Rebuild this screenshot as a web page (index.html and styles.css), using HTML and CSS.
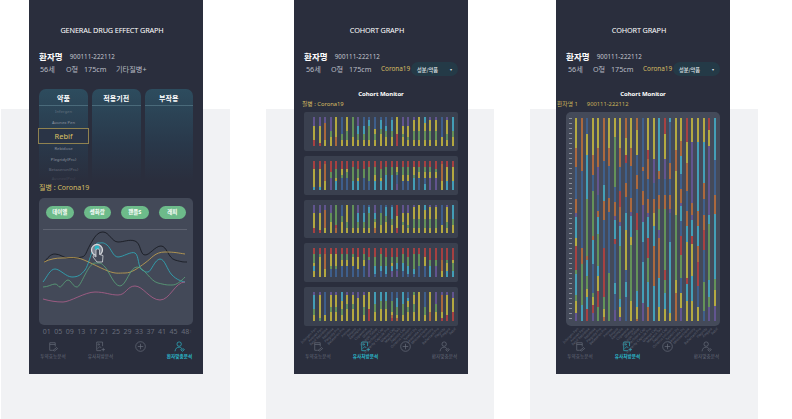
FILE: index.html
```html
<!DOCTYPE html>
<html lang="ko">
<head>
<meta charset="utf-8">
<title>Graphs</title>
<link rel="stylesheet" href="styles.css">
</head>
<body>
<main class="stage">

<section class="panel panel-a">
  <div class="phone">
    <h1 class="title">GENERAL DRUG EFFECT GRAPH</h1>
    <div class="patient"><strong>환자명</strong><span class="pid">900111-222112</span></div>
    <div class="facts facts-a"><span>56세</span><span>O형</span><span>175cm</span><span>기타질병+</span></div>
    <div class="cols">
      <div class="col">
        <h2>약품</h2>
        <ul class="drugs">
          <li class="d1">Infergen</li>
          <li class="d2">Avonex Pen</li>
          <li class="selected">Rebif</li>
          <li class="d2">Rebidose</li>
          <li class="d2">Plegridy(Pro)</li>
          <li class="d3">Betaseron(Pro)</li>
          <li class="d4">Avonex(Pro)</li>
        </ul>
      </div>
      <div class="col"><h2>적용기전</h2></div>
      <div class="col"><h2>부작용</h2></div>
    </div>
    <p class="disease">질병 : Corona19</p>
    <div class="chart">
      <div class="chips"><span>데이엘</span><span>셍화랑</span><span>왠플S</span><span>래피</span></div>
      <svg class="plot" viewBox="39 225 154 100" width="154" height="100" aria-hidden="true">
        <path class="rule" d="M43 229.5H187"/>
        <path class="ln" stroke="#14161d" d="M44 262C48 258 50 254 55 254S64 258 68 258S78 258 82 257S86 252 90 245S97 232 103 232S112 242 118 242S129 239 135 241S140 255 145 255S155 246 161 246S168 258 175 260S183 262 187 262"/>
        <path class="ln" stroke="#c9a650" d="M44 262C50 259 56 258 62 258S72 257 78 258S100 268 108 271S118 273 125 273S138 268 145 263S155 252 165 252S178 253 185 254"/>
        <path class="ln" stroke="#2fb0bf" d="M43 282C47 277 50 269 55 269S66 277 72 277S81 275 85 270S93 243 98 243S103 242 107 245S113 257 118 257S131 251 135 253S138 268 142 270S145 272 148 272S155 259 160 259S167 270 172 275S181 281 185 282"/>
        <path class="ln" stroke="#5aa57a" d="M43 287C48 287 52 284 55 284S58 287 60 287S65 280 68 280S73 287 77 287S88 263 95 263S101 263 105 267S114 286 120 286S130 267 137 267S150 281 158 283S167 285 172 285S181 281 185 277"/>
        <path class="ln" stroke="#b0608c" d="M43 299C50 301 56 302 63 302S85 292 95 292S110 295 118 295S127 286 135 286S150 300 160 300S175 282 185 282"/>
        <g class="touch">
          <circle class="halo" cx="97" cy="250" r="5.5"/>
          <circle class="dot" cx="97" cy="248" r="2.4"/>
          <path class="hand" d="M96 250V257L93.500 255.500L93 257L97 262H102.500L103 255.500L99.500 254.500V250C99.500 248.500 96 248.500 96 250Z"/>
        </g>
      </svg>
    </div>
    <div class="axis"><span>01</span><span>05</span><span>09</span><span>13</span><span>17</span><span>21</span><span>25</span><span>29</span><span>33</span><span>37</span><span>41</span><span>45</span><span class="last">48<small>1</small></span></div>
    <nav class="nav nav-a">
      <a><svg class="ico" viewBox="0 0 16 16"><use href="#i-doc"/></svg>투약효능분석</a>
      <a><svg class="ico" viewBox="0 0 16 16"><use href="#i-img"/></svg>유사처방분석</a>
      <a class="plus"><svg class="ico" viewBox="0 0 16 16"><use href="#i-plus"/></svg></a>
      <a class="on"><svg class="ico" viewBox="0 0 16 16"><use href="#i-user"/></svg>환자맞춤분석</a>
    </nav>
  </div>
</section>

<section class="panel panel-b">
  <div class="phone">
    <h1 class="title">COHORT GRAPH</h1>
    <div class="patient"><strong>환자명</strong><span class="pid">900111-222112</span></div>
    <div class="facts facts-b"><span>56세</span><span>O형</span><span>175cm</span><span class="gold">Corona19</span>
      <button class="pill">성분/약품<i>▾</i></button></div>
    <h2 class="monitor">Cohort Monitor</h2>
    <p class="label">질병 : Corona19</p>
    <div class="rows">
      <div class="bars row" data-row="0"></div>
      <div class="bars row" data-row="1"></div>
      <div class="bars row" data-row="2"></div>
      <div class="bars row" data-row="3"></div>
      <div class="bars row" data-row="4"></div>
    </div>
    <div class="ticks"></div>
    <nav class="nav nav-b">
      <a><svg class="ico" viewBox="0 0 16 16"><use href="#i-doc"/></svg>투약효능분석</a>
      <a class="on"><svg class="ico" viewBox="0 0 16 16"><use href="#i-img"/></svg>유사처방분석</a>
      <a class="plus"><svg class="ico" viewBox="0 0 16 16"><use href="#i-plus"/></svg></a>
      <a><svg class="ico" viewBox="0 0 16 16"><use href="#i-user"/></svg>환자맞춤분석</a>
    </nav>
  </div>
</section>

<section class="panel panel-c">
  <div class="phone">
    <h1 class="title">COHORT GRAPH</h1>
    <div class="patient"><strong>환자명</strong><span class="pid">900111-222112</span></div>
    <div class="facts facts-b"><span>56세</span><span>O형</span><span>175cm</span><span class="gold">Corona19</span>
      <button class="pill">성분/약품<i>▾</i></button></div>
    <h2 class="monitor">Cohort Monitor</h2>
    <p class="label label-c"><span>환자명 1</span><span>900111-222112</span></p>
    <div class="big">
      <div class="scale"></div>
      <div class="bars tall" data-row="tall"></div>
    </div>
    <div class="ticks"></div>
    <nav class="nav nav-b">
      <a><svg class="ico" viewBox="0 0 16 16"><use href="#i-doc"/></svg>투약효능분석</a>
      <a class="on"><svg class="ico" viewBox="0 0 16 16"><use href="#i-img"/></svg>유사처방분석</a>
      <a class="plus"><svg class="ico" viewBox="0 0 16 16"><use href="#i-plus"/></svg></a>
      <a><svg class="ico" viewBox="0 0 16 16"><use href="#i-user"/></svg>환자맞춤분석</a>
    </nav>
  </div>
</section>

</main>

<svg class="defs" aria-hidden="true">
  <symbol id="i-doc" viewBox="0 0 16 16">
    <path d="M10.500 8V2.500H2.500V13.500H7"/><path d="M2.500 5H10.500"/><path d="M7.500 13.500L12.500 9.500L14 11L9.500 14.500Z"/>
  </symbol>
  <symbol id="i-img" viewBox="0 0 16 16">
    <path d="M11 7.500V1.500H2.500V14H9"/><circle cx="5.500" cy="5" r="1"/><path d="M4 11L7 8L9 10"/><path d="M12 10V15M9.500 12.500H14.500"/>
  </symbol>
  <symbol id="i-plus" viewBox="0 0 16 16">
    <circle cx="8" cy="8" r="7"/><path d="M8 4V12M4 8H12"/>
  </symbol>
  <symbol id="i-user" viewBox="0 0 16 16">
    <circle cx="7.500" cy="4.500" r="3.200"/><path d="M1.500 15C2 11 4 9 7.500 9C9 9 10.500 9.500 11.500 11"/><path d="M10 13L12 15L14.800 13C15.500 11.800 13.500 10.800 12.500 12C11.500 10.800 9.500 11.800 10 13Z"/>
  </symbol>
</svg>

<script src="app.js"></script>
</body>
</html>
```

FILE: styles.css
```css
* { box-sizing: border-box; }
html, body { margin: 0; height: 100%; background: #fff; overflow: hidden; }
body { font-family: "Noto Sans", "Noto Sans CJK KR", sans-serif; color: #fff; }
h1, h2, p, ul { margin: 0; padding: 0; font-weight: 400; }
ul { list-style: none; }

.stage { display: flex; height: 419px; padding-left: 1px; gap: 36px; }
.panel { position: relative; background: #f1f2f4; margin-top: 109px; height: 310px; width: 228px; }
.panel-a { width: 229px; }
.phone {
  position: absolute; top: -109px; width: 174px; height: 374px;
  background: #2a2e3d; display: flex; flex-direction: column;
}
.panel-a .phone { left: 28px; }
.panel-b .phone { left: 28px; }
.panel-c .phone { left: 26px; }

.title { margin-top: 24px; height: 12px; line-height: 12px; font-size: 7.300px; text-align: center; padding-right: 8px; white-space: nowrap; letter-spacing: -.15px; }
.patient { margin-top: 15px; height: 12px; line-height: 12px; padding-left: 10px; display: flex; gap: 7px; align-items: center; }
.patient strong { font-size: 8.500px; font-weight: 700; letter-spacing: .1px; }
.pid { font-size: 6.200px; color: #c5c8cf; letter-spacing: .05px; }
.facts { height: 12px; line-height: 12px; display: flex; align-items: center; font-size: 7.200px; color: #b9bcc4; white-space: nowrap; padding-left: 11px; position: relative; }
.facts-a span:nth-child(1) { width: 26px; }
.facts-a span:nth-child(2) { width: 18px; }
.facts-a span:nth-child(3) { width: 32px; }
.facts-b { padding-left: 12px; }
.facts-b span:nth-child(1) { width: 25px; }
.facts-b span:nth-child(2) { width: 18px; }
.facts-b span:nth-child(3) { width: 32px; }
.gold { color: #d6bd63; }
.facts .gold { font-size: 6.400px; }
.pill {
  position: absolute; left: 117px; top: -1px; width: 47px; height: 14px; border: 0; border-radius: 7px;
  background: #243a47; color: #dfe3e6; font: 500 5.200px "Noto Sans CJK KR", sans-serif;
  display: flex; align-items: center; justify-content: space-between; padding: 0 6px;
}
.pill i { font-style: normal; font-size: 4px; }

.cols { display: flex; gap: 4px; margin: 14px 10px 0; height: 92px; }
.col { flex: 1; border-radius: 7px 7px 0 0; background: linear-gradient(#2d4c5e 0%, #29384a 60%, #2a2e3d 100%); position: relative; }
.col h2 { height: 17px; line-height: 19px; text-align: center; font-size: 7px; font-weight: 700; border-bottom: 1px solid #4a6a7a; }
.drugs { display: flex; flex-direction: column; align-items: center; font-size: 4.200px; color: #8d94a0; padding-top: 1px; }
.drugs li { height: 10.500px; line-height: 10.500px; white-space: nowrap; }
.drugs .d1 { opacity: .55; }
.drugs .d3 { opacity: .6; height: 9px; line-height: 9px; }
.drugs .d4 { opacity: .22; height: 9px; line-height: 9px; }
.drugs .selected { width: 51px; height: 16px; line-height: 15px; margin: 0 -1px; border: 1px solid #8f8250; color: #dcc265; font-size: 7.500px; text-align: center; background: #2a3446; position: relative; z-index: 1; }

.disease { margin: 1px 0 0 10px; height: 12px; line-height: 12px; font-size: 7px; color: #d6bd63; }
.chart { margin: 4px 10px 0; width: 154px; height: 127px; background: #434958; border-radius: 5px; overflow: hidden; }
.chips { display: flex; gap: 10px; padding: 8px 7px 0; height: 27px; }
.chips span { width: 28px; height: 13px; border-radius: 7px; background: #6dbb8a; font-size: 5.500px; font-weight: 700; line-height: 12px; text-align: center; }
.plot { display: block; }
.rule { stroke: #6a6f7d; stroke-width: .7; fill: none; }
.ln { fill: none; stroke-width: .8; }
.halo { fill: #7d8390; stroke: #d5d8dc; stroke-width: 1.300; }
.dot { fill: #2bb8c9; }
.hand { fill: #434958; stroke: #d5d8dc; stroke-width: .8; }

.axis { margin: 1px 0 0 12px; width: 150px; height: 12px; line-height: 12px; display: grid; grid-template-columns: repeat(13, 11.540px); font-size: 7px; color: #686d7b; text-align: center; }
.axis .last { position: relative; }
.axis small { position: absolute; left: 10px; top: 0; font-size: 4px; opacity: .6; }

.nav { display: grid; grid-template-columns: 48px 47px 32px 47px; margin-top: 3px; }
.nav a { display: flex; flex-direction: column; align-items: center; font-size: 4.600px; line-height: 6px; color: #686d7b; white-space: nowrap; }
.nav .ico { width: 11px; height: 11px; fill: none; stroke: #686d7b; stroke-width: 1; margin-bottom: 1px; display: block; }
.nav .on { color: #2bb8c9; font-weight: 700; }
.nav .on .ico { stroke: #2bb8c9; }
.nav-b { margin-top: 2px; }

.monitor { margin-top: 12px; height: 12px; line-height: 12px; font-size: 6px; font-weight: 700; text-align: center; padding-right: 0; letter-spacing: -.05px; transform: translateY(1px); }
.label { height: 10px; line-height: 10px; margin: 0 0 3px 8px; font-size: 5.800px; color: #d6bd63; }
.label-c { margin-left: 1px; display: flex; gap: 9px; color: #c9b35a; }
.rows { display: flex; flex-direction: column; gap: 5px; margin: 0 10px; height: 214px; }
.row { flex: 1; min-height: 0; background: #3a404f; border-radius: 2px; padding: 5px 4px 5px 9px; }
.bars { display: flex; justify-content: space-between; }
.bar { width: 2px; display: flex; flex-direction: column; opacity: .85; }
.seg { display: block; min-height: 0; }
.s-y { background: #c9bb3e; }
.s-r { background: #b8413f; }
.s-o { background: #bd6f3a; }
.s-p { background: #68589a; }
.s-b { background: #3f6496; }
.s-g { background: #6a9f5a; }
.s-c { background: #45aec8; }

.big { margin: 0 10px; height: 214px; background: #444a59; border-radius: 5px; display: flex; padding: 6px 4px 5px 3px; gap: 3px; }
.scale { width: 3px; background: repeating-linear-gradient(#c5c8cf 0 1px, transparent 1px 5px); opacity: .55; }
.tall { flex: 1; padding: 0; }

.ticks { margin: 1px 0 0 10px; width: 154px; height: 12px; display: flex; justify-content: space-between; padding: 0 4px 0 8px; }
.tick { width: 3px; height: 3px; position: relative; }
.tick b { position: absolute; right: 0; top: 0; font-weight: 400; font-size: 3.400px; line-height: 4px; color: #626776; white-space: nowrap; transform-origin: right top; transform: rotate(-45deg); }

.defs { position: absolute; width: 0; height: 0; }
```

FILE: app.js
```js
var ROWS = {
  0: "pppyyyyyrr pppyyyyyyr ppooooooyy pppppggyyy yyyyyyyooo bbbbbbggyy yyyyygggyy gggggggyyy pppcccggyy bbbcccggyy bccgggggyy bbbbyyggyy bcccggyyyy bbbccggyyy bccccggyyy yyyyyyrrrr pppyyygyyy pppyyyygyy pyyyygggyy yyyyygggyy ccyyygggyy pyyyygggyy pyyyygggyy bbbbbbbyyy pyyyyyggyy cccccggyyy",
  1: "rrryyyyyyc rrryyyyyyc rooooooyyy rrrrggpppp rrrgggyccc rrryygbbbb rrryggbbbb rrgggggccc rrrgggyccc rrrgggbbbb rrgggggbbb rrgggyyccc rrrgggyccc rrgggccccc rrgggccccc rryygbbbpp rrgggyybbb rrgggyybbb rryyygcccc rrggyybbbb rrggyybbcc rrggyypppp rrrgyypppp rooooooyyy rryyyyyccc rryyyyyccc",
  2: "pppyyyyyrr pppyyyyyyr ppooooooyy pppgggyyyy gggggggroo bbbbggyyyy yyyyyyggyy ggggggggyy pppcccggyy bbbcccggyy bccgggggyy pppccgyyoo bbbggggyyy bcccggyyyy bccccggyyy rrrryyyyrr pppyyygyyy pppyyyygyy pyyyygggyy yyyyygggyy ccyyygggyy pyyyygggyy pyyyygggyy bbbbbbbyyy pyyyyyggyy cccccggyyy",
  3: "rrgggyccyy rrgyyyyyyy rroooooyyy rryyyygbbb rryyyygbbb rrggyybbbb rrggyybbbb rrgyyybbbb rrryyyybbb rrggyybbbb rrrgpppppp rrrgggcccb rrggggccbb rrrgggcccb rrrggyccpp rrrggccbpp rrgggcccbb rrrgggcccb rrgggggccb rrggggbbbb rrryyybbbb rrrrggcccc rrrrggpppp rrrrooooyy rrrrgyyycc rrrrygggcc",
  4: "pcccccggyy pyyyyyyyyg bbbbbbbbyy pyyyyggyyy pyyyyggyyy cccyyyggyy pyyyggyyyy pyyyggyyyy ppyyyyyyyy pyyyygggyy yyyyyyrrrr ccccgggyyy cccgggyyyy cccgggyyyy bbbggggyor bbcccgggyo ccccggggyy bbcyyggyyy gyyygggyyy yyyyyyyyyy bbbbbgggyy yyyyyyyooo ppppgggyyy pooooooyyr pyyyyyyyrr ppyyyyyrrr"
};

var TALL = [
  "y15 o9 b16 o7 p2 c10 y4 r12 g2 c10 g3 y6 p4",
  "o26 b38 o8 g8 g8 g4 c4 c4",
  "b8 y10 c16 c6 g28 o2 c8 g6 y4 c6 r6",
  "y18 o10 b8 g22 o2 c12 b14 g2 y4 r4 p4",
  "y15 o9 p14 b8 o3 c8 g16 c5 y7 r8 g7",
  "o21 b12 c8 o6 o3 b14 r24 g6 y4 o2",
  "y15 o9 b16 o7 b18 b12 g24",
  "y10 g26 b8 o7 p2 c10 r3 b20 c6 b8 p6",
  "y15 o9 b12 r8 o7 p2 c10 g26 c4 y5 p2",
  "o10 y8 r4 b10 o7 b8 c8 y20 b6 c7 b12",
  "y15 o9 b16 o7 p2 c10 y4 g28 y10",
  "o6 y12 b10 o7 b12 r8 g30 c8 y6 o1",
  "b24 o2 b10 o7 p2 p6 c10 b10 c20 p9",
  "y16 r4 o10 b10 o7 p2 c10 r10 g12 c12 o7",
  "y12 y8 p12 b8 o7 y2 y4 c10 o20 c12 c5",
  "c10 c16 o4 b8 o7 g10 p4 o20 c14 y7",
  "r8 y12 p10 b8 o7 g10 g20 r5 g6 c8 y6",
  "c2 b20 o8 b8 o7 p2 b14 c30 c5 y4",
  "y16 o10 y22 g10 g14 g8 y6 o14",
  "y12 o8 c10 b8 o7 p2 c8 b8 r10 g12 b8 y8 p7",
  "r12 y10 o14 b10 o7 c8 y10 y8 r3 c8 y10",
  "y12 p30 o6 p2 c8 r4 y16 c12 y10",
  "y12 c34 o7 c10 o8 r12 b10 y7",
  "y12 c20 o8 b8 o7 r10 b16 g8 g6 b5",
  "r6 y8 p24 p6 p4 c4 g28 c8 g5 p7",
  "c22 b18 o6 o4 c8 c26 g6 y8 p8"
];

var NAMES = ["Infergen Pen","Avonex Pen","Rebif Rebidose","Rebidose","Plegridy Pro","Betaseron Pro","Avonex","Extavia","Kesimpta","Copaxone","Glatopa","Aubagio Tablet","Tecfidera Cap","Vumerity Capsule Pro","Gilenya Cap","Mayzent Tab","Zeposia Cap","Ocrevus Infusion","Tysabri Inj","Lemtrada Inj","Mitoxantrone","Ponvory","Bafiertam Pro","Plegridy","Ampyra","Rebif"];

function seg(colour, grow) {
  var s = document.createElement("span");
  s.className = "seg s-" + colour;
  s.style.flexGrow = grow;
  return s;
}

function addBar(host, parts) {
  var bar = document.createElement("div");
  bar.className = "bar";
  parts.forEach(function (p) { bar.appendChild(seg(p[0], p[1])); });
  host.appendChild(bar);
}

document.querySelectorAll(".bars").forEach(function (host) {
  var key = host.getAttribute("data-row");
  if (key === "tall") {
    TALL.forEach(function (spec) {
      addBar(host, spec.split(" ").map(function (t) { return [t[0], +t.slice(1)]; }));
    });
  } else {
    ROWS[key].split(" ").forEach(function (spec) {
      addBar(host, spec.split("").map(function (c) { return [c, 1]; }));
    });
  }
});

document.querySelectorAll(".ticks").forEach(function (host) {
  NAMES.forEach(function (name) {
    var t = document.createElement("span");
    t.className = "tick";
    var b = document.createElement("b");
    b.textContent = name;
    t.appendChild(b);
    host.appendChild(t);
  });
});
```
